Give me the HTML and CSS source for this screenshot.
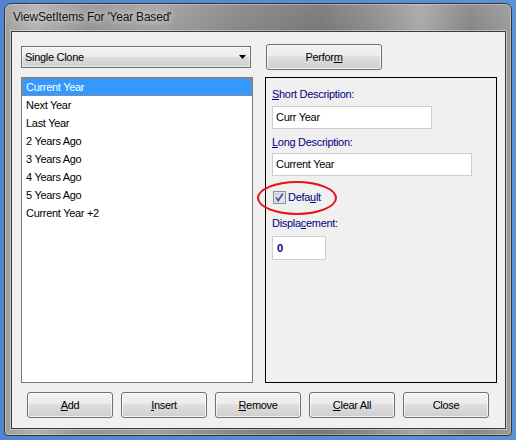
FILE: index.html
```html
<!DOCTYPE html>
<html>
<head>
<meta charset="utf-8">
<link rel="stylesheet" href="styles.css">
</head>
<body>
<div class="window">
  <div class="titlebar"><span class="title">ViewSetItems For 'Year Based'</span></div>
  <div class="client">
    <div class="top-row">
      <div class="combo">
        <span class="combo-text">Single Clone</span>
        <svg class="arrow" width="7" height="4" viewBox="0 0 7 4"><path d="M0 0H7L3.5 4Z" fill="#000"/></svg>
      </div>
      <button class="btn perform">Perfor<u>m</u></button>
    </div>
    <div class="main-row">
      <ul class="list">
        <li class="sel">Current Year</li>
        <li>Next Year</li>
        <li>Last Year</li>
        <li>2 Years Ago</li>
        <li>3 Years Ago</li>
        <li>4 Years Ago</li>
        <li>5 Years Ago</li>
        <li>Current Year +2</li>
      </ul>
      <div class="panel">
        <div class="label"><u>S</u>hort Description:</div>
        <div class="input in-short">Curr Year</div>
        <div class="label label-long"><u>L</u>ong Description:</div>
        <div class="input in-long">Current Year</div>
        <div class="check-row">
          <svg class="checkbox" width="13" height="13" viewBox="0 0 13 13">
            <defs>
              <linearGradient id="cb" x1="0" y1="0" x2="1" y2="1">
                <stop offset="0" stop-color="#d0d4dc"/>
                <stop offset="1" stop-color="#f4f4f6"/>
              </linearGradient>
            </defs>
            <rect x="0.5" y="0.5" width="12" height="12" fill="#f4f4f4" stroke="#8e8f8f"/>
            <rect x="2" y="2" width="9" height="9" fill="url(#cb)" stroke="#b8bcc4" stroke-width="0.6"/>
            <path d="M3.2 6.4 L5.2 9.6 L9.8 2.8" fill="none" stroke="#3e57a0" stroke-width="1.7"/>
          </svg>
          <span class="check-label">Defa<u>u</u>lt</span>
        </div>
        <div class="label label-disp">Displa<u>c</u>ement:</div>
        <div class="input in-disp">0</div>
        <div class="ellipse"></div>
      </div>
    </div>
    <div class="btn-row">
      <button class="btn bottom"><u>A</u>dd</button>
      <button class="btn bottom"><u>I</u>nsert</button>
      <button class="btn bottom"><u>R</u>emove</button>
      <button class="btn bottom"><u>C</u>lear All</button>
      <button class="btn bottom">Close</button>
    </div>
  </div>
</div>
</body>
</html>
```

FILE: styles.css
```css
* { box-sizing: border-box; }

html, body {
  margin: 0;
  width: 516px;
  height: 440px;
  overflow: hidden;
}

body {
  background: linear-gradient(90deg, #4f86cf, #5b92d6);
  padding: 3px 0 0 4px;
  font-family: "Liberation Sans", Arial, sans-serif;
  font-size: 11px;
  letter-spacing: -0.3px;
  color: #000;
}

.window {
  width: 508px;
  height: 433px;
  border: 1px solid #363636;
  border-radius: 7px 7px 4px 4px;
  padding: 0 5px 6px 6px;
  display: flex;
  flex-direction: column;
  background:
    linear-gradient(180deg, rgba(255,255,255,0.08), rgba(255,255,255,0) 30px),
    linear-gradient(90deg, #9e9e9e 0%, #b2b2b2 6%, #949494 16%, #a0a0a0 30%, #878787 46%, #777777 62%, #8a8a8a 72%, #a8a8a8 82%, #868686 92%, #9a9a9a 100%);
  box-shadow: inset 0 0 0 1px rgba(255,255,255,0.3);
}

.titlebar {
  height: 27px;
  line-height: 27px;
  padding-left: 2px;
}

.title {
  font-size: 12px;
  letter-spacing: -0.2px;
  color: #141414;
  text-shadow: 0 0 6px rgba(235,235,235,0.9), 0 0 12px rgba(225,225,225,0.8);
}

.client {
  height: 398px;
  border: 1px solid #3c3c3c;
  background: #f0f0f0;
  padding: 12px 8px 0 9px;
  display: flex;
  flex-direction: column;
  box-shadow: 0 0 0 1px rgba(255,255,255,0.4);
}

.top-row {
  display: flex;
  align-items: center;
  height: 26px;
}

.combo {
  width: 230px;
  height: 22px;
  border: 1px solid #707070;
  background: linear-gradient(#f2f2f2, #ebebeb 50%, #dddddd 50%, #cfcfcf);
  display: flex;
  align-items: center;
  padding: 0 4px 0 3px;
  box-shadow: inset 0 0 0 1px rgba(255,255,255,0.6);
}

.arrow {
  margin-left: auto;
  display: block;
}

.btn {
  border: 1px solid #707070;
  border-radius: 3px;
  background: linear-gradient(#f2f2f2, #ebebeb 45%, #dddddd 50%, #cfcfcf);
  box-shadow: inset 0 0 0 1px rgba(255,255,255,0.75);
  font: inherit;
  letter-spacing: inherit;
  color: #000;
  padding: 0;
  text-align: center;
}

.perform {
  margin-left: 15px;
  width: 116px;
  height: 26px;
}

.main-row {
  display: flex;
  gap: 12px;
  margin-top: 7px;
  height: 306px;
}

.list {
  width: 232px;
  height: 306px;
  border: 1px solid #7a7a7a;
  background: #fff;
  margin: 0;
  padding: 0;
  list-style: none;
}

.list li {
  height: 18px;
  line-height: 18px;
  padding-left: 4px;
}

.list li.sel {
  background: #3399ff;
  color: #fff;
  outline: 1px dotted #c8844a;
  outline-offset: -1px;
}

.panel {
  width: 232px;
  height: 306px;
  border: 1px solid #000;
  padding: 10px 6px 0 6px;
  position: relative;
}

.label {
  color: #000080;
  line-height: 13px;
  height: 13px;
}

.input {
  border: 1px solid #cdcdcd;
  background: #fff;
  height: 23px;
  line-height: 21px;
  padding-left: 3px;
}

.in-short { width: 160px; margin-top: 5px; }
.label-long { margin-top: 7px; }
.in-long { width: 200px; margin-top: 4px; }

.check-row {
  margin-top: 15px;
  height: 13px;
  line-height: 13px;
  display: flex;
  align-items: center;
  gap: 2px;
  padding-left: 1px;
}

.checkbox { display: block; }

.check-label { color: #000080; }

.label-disp { margin-top: 13px; }

.in-disp {
  width: 54px;
  height: 24px;
  line-height: 22px;
  margin-top: 6px;
  padding-left: 4px;
  font-weight: bold;
  color: #000080;
}

.ellipse {
  position: absolute;
  left: -9px;
  top: 103px;
  width: 80px;
  height: 34px;
  border: 2px solid #e4151b;
  border-radius: 50%;
}

.btn-row {
  display: flex;
  gap: 8px;
  margin-top: 9px;
  padding-left: 6px;
}

.bottom {
  width: 86px;
  height: 26px;
}
```
